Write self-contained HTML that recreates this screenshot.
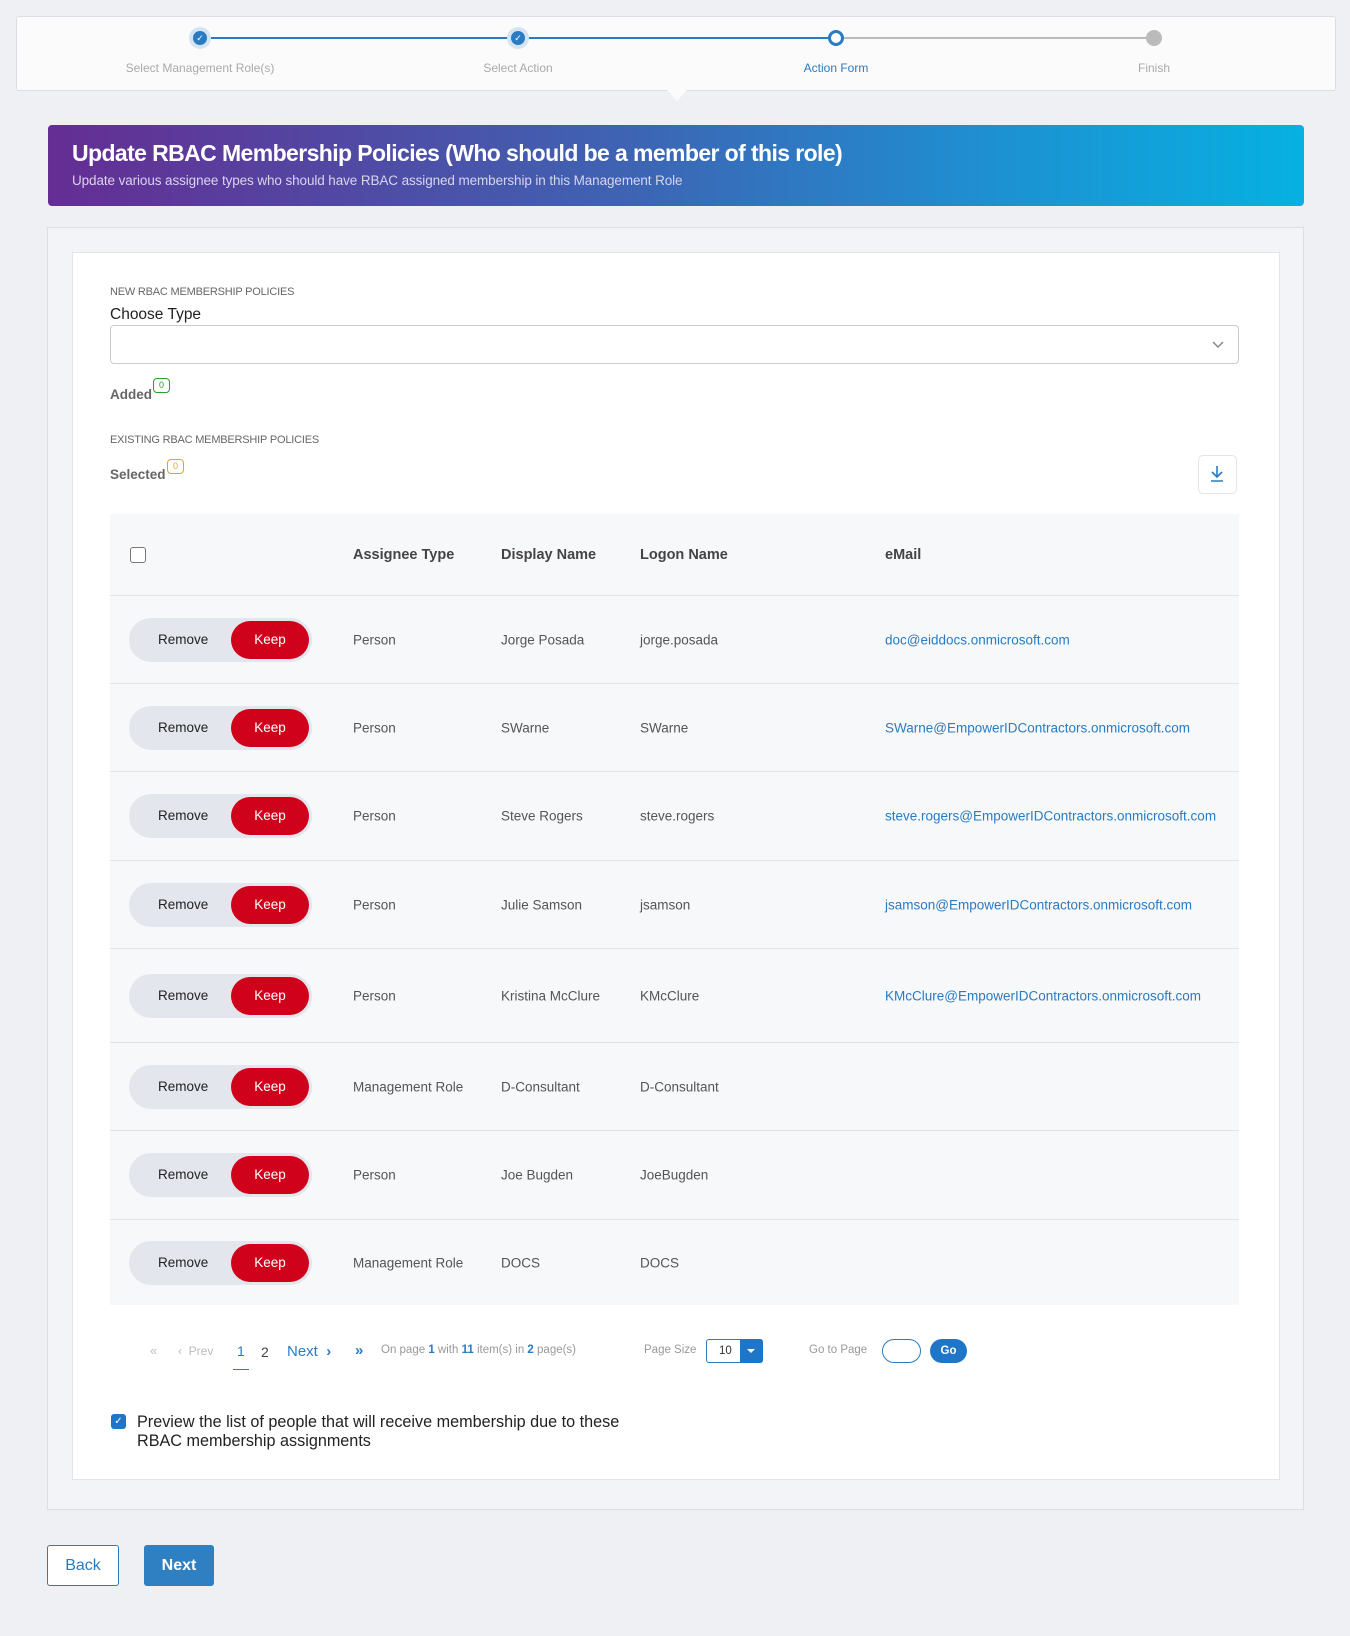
<!DOCTYPE html>
<html><head><meta charset="utf-8"><style>
*{box-sizing:border-box;margin:0;padding:0}
body{width:1350px;height:1636px;background:#eef0f4;font-family:"Liberation Sans",sans-serif;position:relative;overflow:hidden;color:#333}
.a{position:absolute}
.step{position:absolute;left:16px;top:16px;width:1320px;height:75px;background:#fbfbfc;border:1px solid #dcdee6;border-radius:3px}
.lbl{position:absolute;top:44px;font-size:12px;color:#aaa;transform:translateX(-50%);white-space:nowrap}
.banner{left:48px;top:125px;width:1256px;height:81px;border-radius:4px;background:linear-gradient(90deg,#652d93,#3f62b2 45%,#1e90d2 75%,#06b1e1);color:#fff}
.outer{left:47px;top:227px;width:1257px;height:1283px;background:#f3f4f7;border:1px solid #dcdee6}
.inner{left:72px;top:252px;width:1208px;height:1228px;background:#fff;border:1px solid #e2e4ea}
.sm{font-size:11px;color:#666}
.tbl{left:110px;top:514px;width:1129px;background:#f7f8fa}
.row{position:absolute;left:0;width:1129px;border-top:1px solid #e2e4ea;font-size:13.5px;color:#555}
.row span{position:absolute;top:50%;transform:translateY(-50%)}
.tog{position:absolute;left:19px;top:50%;margin-top:-22px;width:183px;height:44px;border-radius:22px;background:#e4e6ee}
.tog b{position:absolute;left:29px;top:14px;font-weight:normal;color:#222;font-size:13.5px}
.tog i{position:absolute;left:102px;top:3px;width:78px;height:38px;border-radius:19px;background:#d0021b;color:#fff;font-style:normal;font-size:13.5px;text-align:center;line-height:38px}
.em{color:#2a7bc1}
.hd{position:absolute;top:33px;font-size:14.5px;font-weight:bold;color:#444}
</style></head><body>
<div class="step">
<div class="a" style="left:183px;top:20px;width:318px;height:2px;background:#2a7bc1"></div>
<div class="a" style="left:501px;top:20px;width:318px;height:2px;background:#2a7bc1"></div>
<div class="a" style="left:819px;top:20px;width:318px;height:2px;background:#bbb"></div>
<div class="a" style="left:172px;top:10px;width:22px;height:22px;border-radius:50%;background:#d4e4f3"></div>
<div class="a" style="left:176px;top:14px;width:14px;height:14px;border-radius:50%;background:#2a7bc1;color:#fff;font-size:9px;text-align:center;line-height:14px">✓</div>
<div class="a" style="left:490px;top:10px;width:22px;height:22px;border-radius:50%;background:#d4e4f3"></div>
<div class="a" style="left:494px;top:14px;width:14px;height:14px;border-radius:50%;background:#2a7bc1;color:#fff;font-size:9px;text-align:center;line-height:14px">✓</div>
<div class="a" style="left:811px;top:13px;width:16px;height:16px;border-radius:50%;background:#fff;border:3px solid #2a7bc1"></div>
<div class="a" style="left:1129px;top:13px;width:16px;height:16px;border-radius:50%;background:#bbb"></div>
<div class="lbl" style="left:183px">Select Management Role(s)</div>
<div class="lbl" style="left:501px">Select Action</div>
<div class="lbl" style="left:819px;color:#2a7bc1">Action Form</div>
<div class="lbl" style="left:1137px">Finish</div>
</div>
<div class="a" style="left:667px;top:90px;width:0;height:0;border-left:10px solid transparent;border-right:10px solid transparent;border-top:11px solid #fbfbfc"></div>
<div class="a banner">
<div class="a" style="left:24px;top:15px;font-size:23px;font-weight:bold;letter-spacing:-0.6px">Update RBAC Membership Policies (Who should be a member of this role)</div>
<div class="a" style="left:24px;top:48px;font-size:13.5px;color:#d8d4ee;letter-spacing:-0.1px">Update various assignee types who should have RBAC assigned membership in this Management Role</div>
</div>
<div class="a outer"></div>
<div class="a inner"></div>
<div class="a sm" style="left:110px;top:286px;letter-spacing:-0.2px">NEW RBAC MEMBERSHIP POLICIES</div>
<div class="a" style="left:110px;top:306px;font-size:15.5px;color:#222">Choose Type</div>
<div class="a" style="left:110px;top:325px;width:1129px;height:39px;border:1px solid #ccc;border-radius:4px"></div>
<svg class="a" style="left:1212px;top:341px" width="12" height="8"><path d="M1 1l5 5 5-5" stroke="#888" stroke-width="1.5" fill="none"/></svg>
<div class="a" style="left:110px;top:387px;font-size:13.5px;font-weight:bold;color:#666">Added</div>
<div class="a" style="left:153px;top:378px;width:17px;height:15px;border:1px solid #2aa02a;border-radius:4px;font-size:9px;color:#2aa02a;text-align:center;line-height:13px">0</div>
<div class="a sm" style="left:110px;top:434px;letter-spacing:-0.2px">EXISTING RBAC MEMBERSHIP POLICIES</div>
<div class="a" style="left:110px;top:467px;font-size:13.5px;font-weight:bold;color:#666">Selected</div>
<div class="a" style="left:167px;top:459px;width:17px;height:15px;border:1px solid #f0a020;border-radius:4px;font-size:9px;color:#f0a020;text-align:center;line-height:13px">0</div>
<div class="a" style="left:1198px;top:455px;width:39px;height:39px;border:1px solid #e2e4ea;border-radius:5px"></div>
<svg class="a" style="left:1209px;top:465px" width="16" height="18"><path d="M8 1v11M3 7l5 5 5-5M2 16h12" stroke="#2a7bc1" stroke-width="1.6" fill="none"/></svg>
<div class="a tbl" style="height:791px">
<div class="a" style="left:20px;top:33px;width:16px;height:16px;border:1px solid #777;border-radius:3px;background:#fff"></div>
<div class="hd" style="left:243px">Assignee Type</div>
<div class="hd" style="left:391px">Display Name</div>
<div class="hd" style="left:530px">Logon Name</div>
<div class="hd" style="left:775px">eMail</div>
<div class="row" style="top:81px;height:88px"><div class="tog"><b>Remove</b><i>Keep</i></div><span style="left:243px">Person</span><span style="left:391px">Jorge Posada</span><span style="left:530px">jorge.posada</span><span class="em" style="left:775px">doc@eiddocs.onmicrosoft.com</span></div>
<div class="row" style="top:169px;height:88px"><div class="tog"><b>Remove</b><i>Keep</i></div><span style="left:243px">Person</span><span style="left:391px">SWarne</span><span style="left:530px">SWarne</span><span class="em" style="left:775px">SWarne@EmpowerIDContractors.onmicrosoft.com</span></div>
<div class="row" style="top:257px;height:89px"><div class="tog"><b>Remove</b><i>Keep</i></div><span style="left:243px">Person</span><span style="left:391px">Steve Rogers</span><span style="left:530px">steve.rogers</span><span class="em" style="left:775px">steve.rogers@EmpowerIDContractors.onmicrosoft.com</span></div>
<div class="row" style="top:346px;height:88px"><div class="tog"><b>Remove</b><i>Keep</i></div><span style="left:243px">Person</span><span style="left:391px">Julie Samson</span><span style="left:530px">jsamson</span><span class="em" style="left:775px">jsamson@EmpowerIDContractors.onmicrosoft.com</span></div>
<div class="row" style="top:434px;height:94px"><div class="tog"><b>Remove</b><i>Keep</i></div><span style="left:243px">Person</span><span style="left:391px">Kristina McClure</span><span style="left:530px">KMcClure</span><span class="em" style="left:775px">KMcClure@EmpowerIDContractors.onmicrosoft.com</span></div>
<div class="row" style="top:528px;height:88px"><div class="tog"><b>Remove</b><i>Keep</i></div><span style="left:243px">Management Role</span><span style="left:391px">D-Consultant</span><span style="left:530px">D-Consultant</span></div>
<div class="row" style="top:616px;height:89px"><div class="tog"><b>Remove</b><i>Keep</i></div><span style="left:243px">Person</span><span style="left:391px">Joe Bugden</span><span style="left:530px">JoeBugden</span></div>
<div class="row" style="top:705px;height:86px"><div class="tog"><b>Remove</b><i>Keep</i></div><span style="left:243px">Management Role</span><span style="left:391px">DOCS</span><span style="left:530px">DOCS</span></div>
</div>
<div class="a" style="left:150px;top:1343px;font-size:13px;color:#bbb">«</div>
<div class="a" style="left:178px;top:1344px;font-size:12px;color:#bbb">‹ &nbsp;Prev</div>
<div class="a" style="left:237px;top:1343px;font-size:14px;color:#2a7bc1">1</div>
<div class="a" style="left:233px;top:1369px;width:16px;height:1px;background:#2a7bc1"></div>
<div class="a" style="left:261px;top:1344px;font-size:14px;color:#444">2</div>
<div class="a" style="left:287px;top:1343px;font-size:15px;color:#2a7bc1">Next &nbsp;<b>›</b></div>
<div class="a" style="left:355px;top:1342px;font-size:15px;color:#2a7bc1;font-weight:bold">»</div>
<div class="a" style="left:381px;top:1344px;font-size:11.5px;color:#999">On page <b style="color:#2a7bc1">1</b> with <b style="color:#2a7bc1">11</b> item(s) in <b style="color:#2a7bc1">2</b> page(s)</div>
<div class="a" style="left:644px;top:1344px;font-size:11.5px;color:#999">Page Size</div>
<div class="a" style="left:706px;top:1339px;width:57px;height:24px;border:1px solid #2a7bc1;border-radius:3px;font-size:11.5px;padding:5px 0 0 12px;color:#333">10</div>
<div class="a" style="left:740px;top:1339px;width:23px;height:24px;background:#1f76c9;border-radius:0 3px 3px 0"></div>
<div class="a" style="left:747px;top:1349px;border-left:4px solid transparent;border-right:4px solid transparent;border-top:4px solid #fff"></div>
<div class="a" style="left:809px;top:1344px;font-size:11.5px;color:#999">Go to Page</div>
<div class="a" style="left:882px;top:1339px;width:39px;height:24px;border:1px solid #2a7bc1;border-radius:12px"></div>
<div class="a" style="left:930px;top:1339px;width:37px;height:24px;background:#1f76c9;border-radius:12px;color:#fff;font-size:11.5px;font-weight:bold;text-align:center;line-height:24px">Go</div>
<div class="a" style="left:111px;top:1414px;width:15px;height:15px;background:#1f76c9;border-radius:3px;color:#fff;font-size:10px;text-align:center;line-height:15px">✓</div>
<div class="a" style="left:137px;top:1413px;font-size:16.2px;color:#222;line-height:19px">Preview the list of people that will receive membership due to these<br>RBAC membership assignments</div>
<div class="a" style="left:47px;top:1545px;width:72px;height:41px;border:1px solid #2a7bc1;border-radius:3px;background:#fff;color:#2a7bc1;font-size:16px;text-align:center;line-height:39px">Back</div>
<div class="a" style="left:144px;top:1545px;width:70px;height:41px;border-radius:3px;background:#2f7fc3;color:#fff;font-size:16px;font-weight:bold;text-align:center;line-height:41px">Next</div>
</body></html>
